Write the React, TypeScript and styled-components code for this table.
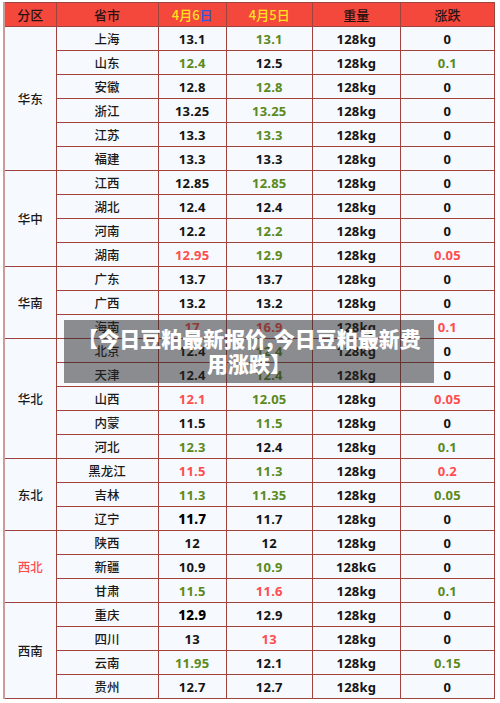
import React from "react";
import styled, { createGlobalStyle } from "styled-components";

const GlobalStyle = createGlobalStyle`
  html, body {
    margin: 0;
    padding: 0;
    background: #ffffff;
  }
  body {
    font-family: "Noto Sans", "Noto Sans CJK SC", sans-serif;
  }
`;

type Tone = "black" | "green" | "red" | "heavy";

interface Row {
  city: string;
  today: [string, Tone];
  yesterday: [string, Tone];
  weight?: string;
  change: [string, Tone];
}

interface Group {
  region: string;
  alert?: boolean;
  rows: Row[];
}

const groups: Group[] = [
  {
    region: "华东",
    rows: [
      { city: "上海", today: ["13.1", "black"], yesterday: ["13.1", "green"], change: ["0", "black"] },
      { city: "山东", today: ["12.4", "green"], yesterday: ["12.5", "black"], change: ["0.1", "green"] },
      { city: "安徽", today: ["12.8", "black"], yesterday: ["12.8", "green"], change: ["0", "black"] },
      { city: "浙江", today: ["13.25", "black"], yesterday: ["13.25", "green"], change: ["0", "black"] },
      { city: "江苏", today: ["13.3", "black"], yesterday: ["13.3", "green"], change: ["0", "black"] },
      { city: "福建", today: ["13.3", "black"], yesterday: ["13.3", "black"], change: ["0", "black"] },
    ],
  },
  {
    region: "华中",
    rows: [
      { city: "江西", today: ["12.85", "black"], yesterday: ["12.85", "green"], change: ["0", "black"] },
      { city: "湖北", today: ["12.4", "black"], yesterday: ["12.4", "black"], change: ["0", "black"] },
      { city: "河南", today: ["12.2", "black"], yesterday: ["12.2", "green"], change: ["0", "black"] },
      { city: "湖南", today: ["12.95", "red"], yesterday: ["12.9", "green"], change: ["0.05", "red"] },
    ],
  },
  {
    region: "华南",
    rows: [
      { city: "广东", today: ["13.7", "black"], yesterday: ["13.7", "black"], change: ["0", "black"] },
      { city: "广西", today: ["13.2", "black"], yesterday: ["13.2", "black"], change: ["0", "black"] },
      { city: "海南", today: ["17", "red"], yesterday: ["16.9", "red"], change: ["0.1", "red"] },
    ],
  },
  {
    region: "华北",
    rows: [
      { city: "北京", today: ["12.4", "black"], yesterday: ["12.4", "green"], change: ["0", "black"] },
      { city: "天津", today: ["12.4", "black"], yesterday: ["12.4", "green"], change: ["0", "black"] },
      { city: "山西", today: ["12.1", "red"], yesterday: ["12.05", "green"], change: ["0.05", "red"] },
      { city: "内蒙", today: ["11.5", "black"], yesterday: ["11.5", "green"], change: ["0", "black"] },
      { city: "河北", today: ["12.3", "green"], yesterday: ["12.4", "black"], change: ["0.1", "green"] },
    ],
  },
  {
    region: "东北",
    rows: [
      { city: "黑龙江", today: ["11.5", "red"], yesterday: ["11.3", "green"], change: ["0.2", "red"] },
      { city: "吉林", today: ["11.3", "green"], yesterday: ["11.35", "green"], change: ["0.05", "green"] },
      { city: "辽宁", today: ["11.7", "heavy"], yesterday: ["11.7", "black"], change: ["0", "black"] },
    ],
  },
  {
    region: "西北",
    alert: true,
    rows: [
      { city: "陕西", today: ["12", "black"], yesterday: ["12", "black"], change: ["0", "black"] },
      { city: "新疆", today: ["10.9", "black"], yesterday: ["10.9", "green"], weight: "128kG", change: ["0", "black"] },
      { city: "甘肃", today: ["11.5", "green"], yesterday: ["11.6", "red"], change: ["0.1", "green"] },
    ],
  },
  {
    region: "西南",
    rows: [
      { city: "重庆", today: ["12.9", "heavy"], yesterday: ["12.9", "black"], change: ["0", "black"] },
      { city: "四川", today: ["13", "black"], yesterday: ["13", "red"], change: ["0", "black"] },
      { city: "云南", today: ["11.95", "green"], yesterday: ["12.1", "black"], change: ["0.15", "green"] },
      { city: "贵州", today: ["12.7", "black"], yesterday: ["12.7", "black"], change: ["0", "black"] },
    ],
  },
];

const toneColor: Record<Tone, string> = {
  black: "#141414",
  heavy: "#000000",
  green: "#5a8a1c",
  red: "#ff4d4d",
};

const Page = styled.div`
  position: relative;
  width: 500px;
  height: 703px;
  padding: 2px 0 0 3px;
  box-sizing: border-box;
  overflow: hidden;
`;

const Table = styled.table`
  border-collapse: collapse;
  table-layout: fixed;
  width: 492px;
  border-left: 2px solid #c99b9b;
  border-right: 1px solid #a0423d;
  border-top: 1px solid #a0423d;
  border-bottom: 1px solid #b06a66;
`;

const HeadCell = styled.th<{ $tint?: string }>`
  height: 23px;
  padding: 0;
  background: #f4483d;
  color: ${(p) => p.$tint ?? "#2b1212"};
  font-family: "Noto Sans CJK SC", sans-serif;
  font-size: 13px;
  font-weight: 500;
  text-align: center;
  border: 1px solid #a0423d;
`;

const Blue = styled.span`
  color: #2f55e6;
`;

const BodyRow = styled.tr`
  height: 24px;
  background: #f6f9fe;
`;

const RegionCell = styled.td<{ $alert?: boolean }>`
  padding: 0;
  text-align: center;
  vertical-align: middle;
  background: #f6f9fe;
  color: ${(p) => (p.$alert ? "#ff4d4d" : "#1a1a1a")};
  font-family: "Noto Sans CJK SC", sans-serif;
  font-size: 12.5px;
  font-weight: 500;
  border: 1px solid #a0423d;
  border-left: none;
`;

const CityCell = styled.td`
  padding: 0;
  text-align: center;
  color: #1a1a1a;
  font-family: "Noto Sans CJK SC", sans-serif;
  font-size: 12.5px;
  font-weight: 500;
  border: 1px solid #a0423d;
`;

const NumCell = styled.td<{ $tone: Tone }>`
  padding: 0;
  text-align: center;
  color: ${(p) => toneColor[p.$tone]};
  font-family: "Noto Sans", sans-serif;
  font-size: ${(p) => (p.$tone === "heavy" ? "13.5px" : "13px")};
  font-weight: ${(p) => (p.$tone === "heavy" ? 800 : 700)};
  letter-spacing: 0.2px;
  border: 1px solid #a0423d;
`;

const Banner = styled.div`
  position: absolute;
  left: 64px;
  top: 320px;
  width: 370px;
  height: 63px;
  box-sizing: border-box;
  padding: 6px 12px;
  background: rgba(40, 40, 40, 0.52);
  color: #ffffff;
  font-family: "Noto Sans CJK SC", sans-serif;
  font-size: 21px;
  font-weight: 900;
  line-height: 25px;
  text-align: center;
`;

export default function App() {
  return (
    <>
      <GlobalStyle />
      <Page>
        <Table>
          <colgroup>
            <col style={{ width: 52 }} />
            <col style={{ width: 102 }} />
            <col style={{ width: 68 }} />
            <col style={{ width: 86 }} />
            <col style={{ width: 88 }} />
            <col style={{ width: 94 }} />
          </colgroup>
          <thead>
            <tr>
              <HeadCell>分区</HeadCell>
              <HeadCell>省市</HeadCell>
              <HeadCell $tint="#ffe21f">
                4月6<Blue>日</Blue>
              </HeadCell>
              <HeadCell $tint="#ffe21f">4月5日</HeadCell>
              <HeadCell>重量</HeadCell>
              <HeadCell>涨跌</HeadCell>
            </tr>
          </thead>
          <tbody>
            {groups.map((g) =>
              g.rows.map((r, i) => (
                <BodyRow key={g.region + r.city}>
                  {i === 0 && (
                    <RegionCell rowSpan={g.rows.length} $alert={g.alert}>
                      {g.region}
                    </RegionCell>
                  )}
                  <CityCell>{r.city}</CityCell>
                  <NumCell $tone={r.today[1]}>{r.today[0]}</NumCell>
                  <NumCell $tone={r.yesterday[1]}>{r.yesterday[0]}</NumCell>
                  <NumCell $tone="black">{r.weight ?? "128kg"}</NumCell>
                  <NumCell $tone={r.change[1]}>{r.change[0]}</NumCell>
                </BodyRow>
              ))
            )}
          </tbody>
        </Table>
        <Banner>【今日豆粕最新报价,今日豆粕最新费用涨跌】</Banner>
      </Page>
    </>
  );
}
